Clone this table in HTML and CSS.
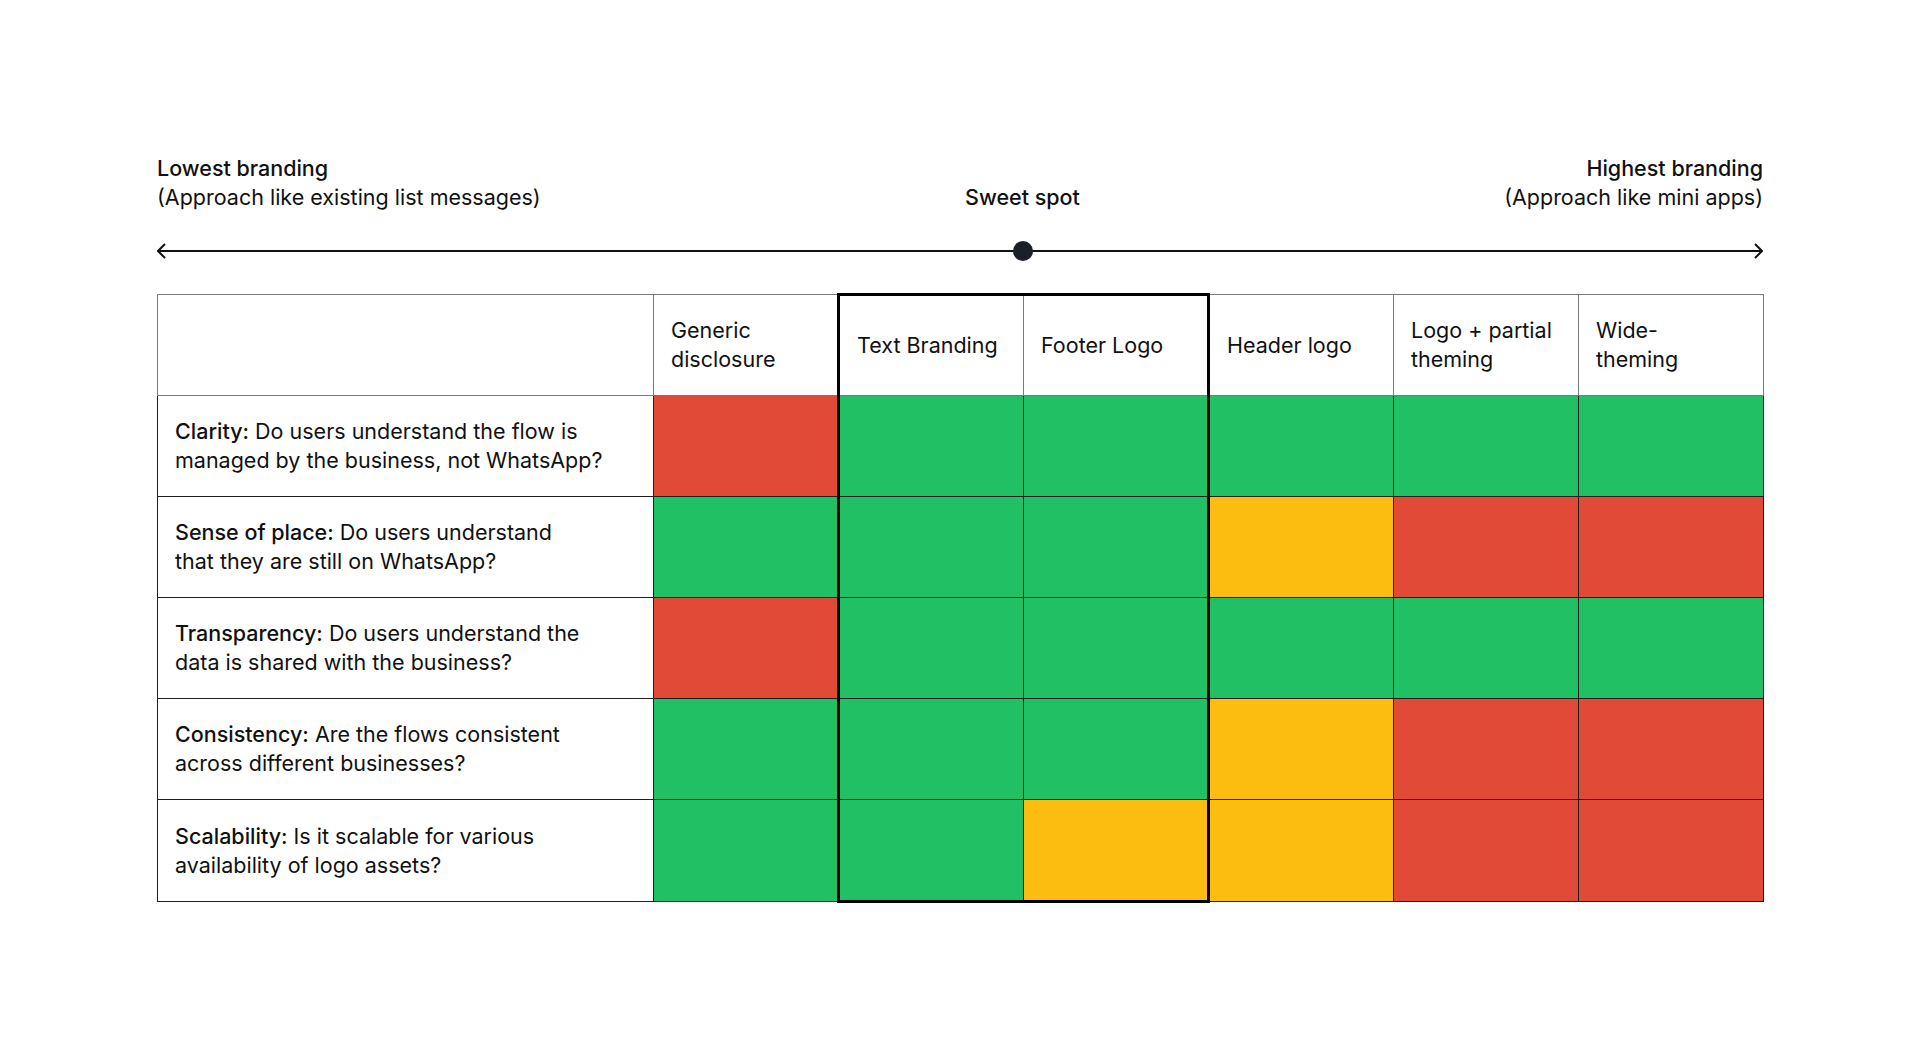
FILE: index.html
```html
<!DOCTYPE html>
<html lang="en">
<head>
    <meta charset="UTF-8">
    <meta name="viewport" content="width=device-width, initial-scale=1.0">
    <title>Branding spectrum</title>
    <link rel="stylesheet" href="styles.css">
</head>
<body>
    <div class="page">
        <div class="scale-labels">
            <div class="label-low">
                <div class="strong">Lowest branding</div>
                <div>(Approach like existing list messages)</div>
            </div>
            <div class="label-mid strong">Sweet spot</div>
            <div class="label-high">
                <div class="strong">Highest branding</div>
                <div>(Approach like mini apps)</div>
            </div>
        </div>

        <svg class="axis" width="1606" height="20" viewBox="0 0 1606 20">
            <line x1="1" y1="10" x2="1605" y2="10" stroke="#111" stroke-width="2"/>
            <polyline points="8,3 1,10 8,17" fill="none" stroke="#111" stroke-width="2"/>
            <polyline points="1598,3 1605,10 1598,17" fill="none" stroke="#111" stroke-width="2"/>
            <circle cx="866" cy="10" r="10" fill="#1b1f2a"/>
        </svg>

        <table class="matrix">
            <colgroup>
                <col class="col-label">
                <col span="6" class="col-opt">
            </colgroup>
            <thead>
                <tr>
                    <th></th>
                    <th>Generic<br>disclosure</th>
                    <th class="sweet-l">Text Branding</th>
                    <th class="sweet-r">Footer Logo</th>
                    <th>Header logo</th>
                    <th>Logo + partial<br>theming</th>
                    <th>Wide-<br>theming</th>
                </tr>
            </thead>
            <tbody>
                <tr>
                    <td class="q"><span class="strong">Clarity:</span> Do users understand the flow is<br>managed by the business, not WhatsApp?</td>
                    <td class="red"></td>
                    <td class="green sweet-l"></td>
                    <td class="green sweet-r"></td>
                    <td class="green"></td>
                    <td class="green"></td>
                    <td class="green"></td>
                </tr>
                <tr>
                    <td class="q"><span class="strong">Sense of place:</span> Do users understand<br>that they are still on WhatsApp?</td>
                    <td class="green"></td>
                    <td class="green sweet-l"></td>
                    <td class="green sweet-r"></td>
                    <td class="yellow"></td>
                    <td class="red"></td>
                    <td class="red"></td>
                </tr>
                <tr>
                    <td class="q"><span class="strong">Transparency:</span> Do users understand the<br>data is shared with the business?</td>
                    <td class="red"></td>
                    <td class="green sweet-l"></td>
                    <td class="green sweet-r"></td>
                    <td class="green"></td>
                    <td class="green"></td>
                    <td class="green"></td>
                </tr>
                <tr>
                    <td class="q"><span class="strong">Consistency:</span> Are the flows consistent<br>across different businesses?</td>
                    <td class="green"></td>
                    <td class="green sweet-l"></td>
                    <td class="green sweet-r"></td>
                    <td class="yellow"></td>
                    <td class="red"></td>
                    <td class="red"></td>
                </tr>
                <tr class="last">
                    <td class="q"><span class="strong">Scalability:</span> Is it scalable for various<br>availability of logo assets?</td>
                    <td class="green"></td>
                    <td class="green sweet-l"></td>
                    <td class="yellow sweet-r"></td>
                    <td class="yellow"></td>
                    <td class="red"></td>
                    <td class="red"></td>
                </tr>
            </tbody>
        </table>
    </div>
</body>
</html>
```

FILE: styles.css
```css
body {
    margin: 0;
    background-color: #ffffff;
    color: #111111;
    font-family: "Inter", "Liberation Sans", Arial, sans-serif;
    font-size: 21.5px;
    line-height: 29px;
}

.page {
    width: 1606px;
    padding: 154px 0 0 157px;
}

.strong {
    font-weight: 500;
}

.scale-labels {
    display: grid;
    grid-template-columns: 496px 185px 184px 185px 185px 185px 186px;
    align-items: end;
}

.label-low {
    grid-column: 1 / 3;
}

.label-mid {
    grid-column: 3 / 5;
    text-align: center;
}

.label-high {
    grid-column: 5 / 8;
    text-align: right;
}

.axis {
    display: block;
    margin-top: 29px;
}

.matrix {
    margin-top: 32px;
    width: 1606px;
    table-layout: fixed;
    border-collapse: collapse;
    border: 1px solid #222;
}

.col-label {
    width: 496px;
}

.col-opt {
    width: 185px;
}

th {
    height: 99px;
    padding: 0 17px;
    border: 1px solid #7a7a7a;
    text-align: left;
    font-weight: 400;
    vertical-align: middle;
}

td {
    height: 100px;
    padding: 0 17px;
    border: 1px solid #1e1e1e;
}

td.q {
    vertical-align: middle;
}

.red {
    background-color: #e04a36;
}

.green {
    background-color: #22c065;
}

.yellow {
    background-color: #fdbc10;
}

.sweet-l {
    border-left: 3px solid #000;
}

.sweet-r {
    border-right: 3px solid #000;
}

th.sweet-l,
th.sweet-r {
    border-top: 3px solid #000;
}

.last .sweet-l,
.last .sweet-r {
    border-bottom: 3px solid #000;
}
```
